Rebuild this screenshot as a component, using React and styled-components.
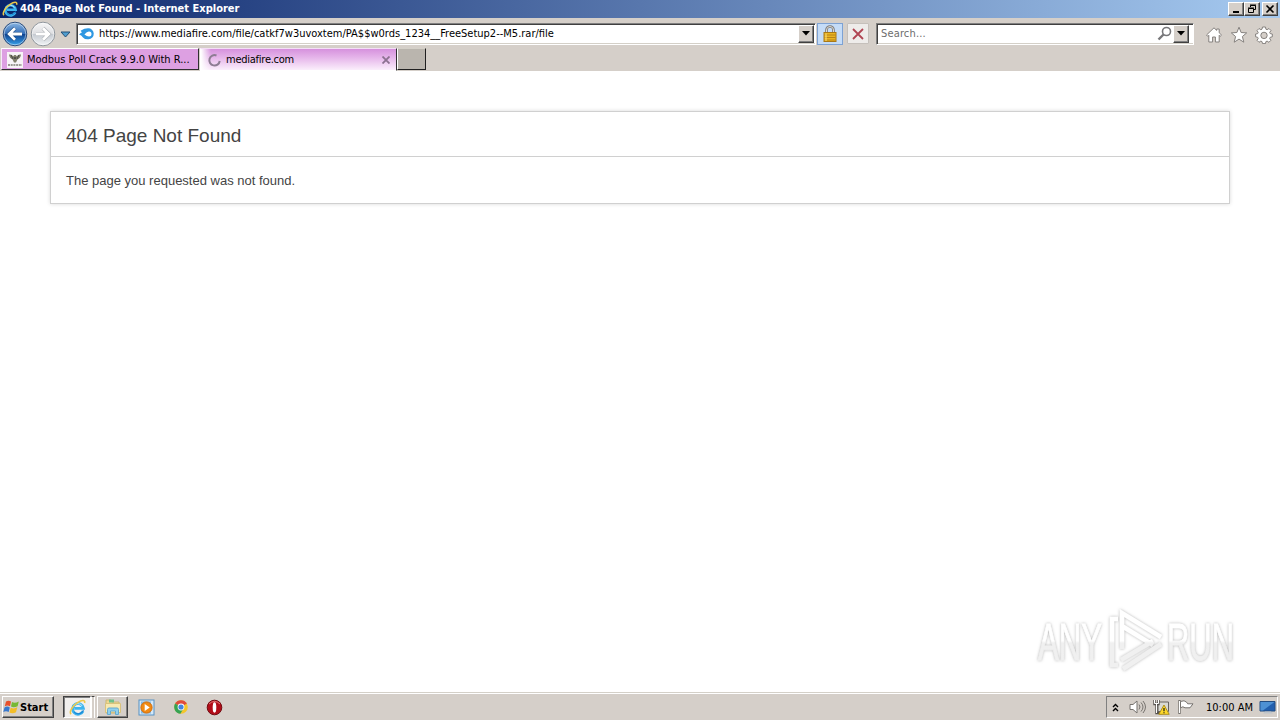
import React from 'react';
import styled, { createGlobalStyle, css } from 'styled-components';

const GlobalStyle = createGlobalStyle`
  * {
    box-sizing: border-box;
  }

  body {
    margin: 0;
    background: #fff;
    overflow: hidden;
  }
`;

const Screen = styled.div`
  width: 1280px;
  height: 720px;
  display: flex;
  flex-direction: column;
  position: relative;
  overflow: hidden;
  background: #fff;
  color: #000;
  font-family: 'DejaVu Sans Condensed', 'DejaVu Sans', sans-serif;
  font-stretch: condensed;
  font-size: 11px;

  svg {
    display: block;
    flex-shrink: 0;
  }
`;

const Label = styled.span`
  white-space: nowrap;
  line-height: 14px;
  padding-top: ${({ $drop }) => $drop || 0}px;
  letter-spacing: ${({ $spacing }) => $spacing || 0}px;
  font-weight: ${({ $bold }) => ($bold ? 700 : 400)};
  color: ${({ $color }) => $color || 'inherit'};
`;

const raised = css`
  border: 1px solid;
  border-color: #fff #404040 #404040 #fff;
  box-shadow: inset -1px -1px 0 #808080;
  background: #d5cfc9;
`;

const TitleBar = styled.div`
  height: 18px;
  display: flex;
  align-items: center;
  padding: 0 2px;
  gap: 2px;
  color: #fff;
  background: linear-gradient(90deg, #0a246a, #a6caf0);
`;

const WindowButtons = styled.div`
  display: flex;
  margin-left: auto;
`;

const WindowButton = styled.div`
  ${raised}
  width: 16px;
  height: 14px;
  display: flex;
  align-items: center;
  justify-content: center;
  margin-left: ${({ $gap }) => $gap || 0}px;
`;

const Toolbar = styled.div`
  height: 30px;
  display: flex;
  align-items: center;
  padding: 1px 7px 0 2px;
  background: #d5cfc9;
`;

const HistoryButtons = styled.div`
  display: flex;
  align-items: center;
  width: 74px;
  gap: 2px;
`;

const Field = styled.div`
  width: ${({ $width }) => $width}px;
  height: 22px;
  display: flex;
  align-items: center;
  padding: 0 1px 0 ${({ $pad }) => $pad}px;
  margin-left: ${({ $gap }) => $gap || 0}px;
  background: #fff;
  border: 1px solid;
  border-color: #808080 #fff #fff #808080;
  box-shadow: inset 1px 1px 0 #404040, inset 0 -1px 0 #d4d0c8;
`;

const FieldText = styled(Label)`
  flex: 1;
  margin-left: ${({ $left }) => $left || 0}px;
`;

const DropButton = styled.div`
  ${raised}
  width: 16px;
  height: 18px;
  display: flex;
  align-items: center;
  justify-content: center;
`;

const LockButton = styled.div`
  width: 26px;
  height: 22px;
  margin: 0 4px 0 1px;
  display: flex;
  align-items: center;
  justify-content: center;
  background: #c5dcf7;
  border: 1px solid #7da2d4;
`;

const StopButton = styled.div`
  width: 22px;
  height: 21px;
  display: flex;
  align-items: center;
  justify-content: center;
  background: #eeecea;
  border: 1px solid #c5c0bb;
  border-radius: 1px;
`;

const Commands = styled.div`
  display: flex;
  gap: 7px;
  margin-left: auto;
  padding-top: 3px;
`;

const TabBar = styled.div`
  height: 23px;
  display: flex;
  align-items: flex-start;
  background: #d5cfc9;
`;

const Tab = styled.div`
  width: ${({ $width }) => $width}px;
  height: 22px;
  margin-left: 1px;
  display: flex;
  align-items: center;
  padding: 2px 5px 0;
  gap: 4px;
  border: 1px solid;
  border-color: #fff #303030 #303030 #f7eafa;
  background: #dda0e2;

  ${({ $active }) =>
    $active &&
    css`
      height: 23px;
      padding: 1px 6px 0;
      border-color: #f4dff6 #303030 #fff #fff;
      background:
        linear-gradient(90deg, #fff, transparent 10px),
        linear-gradient(#d691dd, #e7b9eb 45%, #fbeffc);
    `}
`;

const NewTab = styled.div`
  width: 29px;
  height: 22px;
  background: #bab5ae;
  border: 1px solid;
  border-color: #d4d0c8 #202020 #202020 #fff;
`;

const Page = styled.main`
  flex: 1;
  padding: 40px 50px 0;
  color: #444;
  font-family: 'Liberation Sans', Arial, sans-serif;
`;

const ErrorCard = styled.section`
  height: 93px;
  border: 1px solid #d0d0d0;
  box-shadow: 0 0 4px #d8d8d8;
`;

const ErrorTitle = styled.h1`
  height: 45px;
  margin: 0;
  padding: 12px 15px 0;
  border-bottom: 1px solid #d0d0d0;
  font-size: 19px;
  font-weight: 400;
  line-height: 24px;
`;

const ErrorText = styled.p`
  margin: 16px 15px;
  font-size: 13px;
  line-height: 16px;
`;

const Taskbar = styled.div`
  height: 28px;
  display: flex;
  align-items: center;
  padding: 1px 2px 0;
  background: #d5cfc9;
  border-top: 1px solid #d4d0c8;
  box-shadow: inset 0 1px 0 #fff;
`;

const StartButton = styled.div`
  ${raised}
  width: 52px;
  height: 22px;
  display: flex;
  align-items: center;
`;

const TaskButton = styled.div`
  width: 31px;
  height: 22px;
  display: flex;
  align-items: center;
  justify-content: center;
  margin-left: ${({ $gap }) => $gap || 0}px;
  ${({ $flat }) => !$flat && raised}

  ${({ $pressed }) =>
    $pressed &&
    css`
      width: 28px;
      background: #f1efed;
      border-color: #404040 #fff #fff #404040;
      box-shadow: inset 1px 1px 0 #808080;
    `}
`;

const TaskStack = styled.div`
  width: 4px;
  height: 22px;
  border-top: 1px solid #404040;
  border-right: 1px solid #fff;
  border-left: 1px solid #fff;
`;

const Tray = styled.div`
  width: 172px;
  height: 22px;
  margin-left: auto;
  display: flex;
  align-items: center;
  padding: 0 1px 0 5px;
  border: 1px solid;
  border-color: #808080 #fff #fff #808080;
`;

const TrayItem = styled.div`
  width: ${({ $width }) => $width}px;
`;

const Watermark = styled.div`
  position: absolute;
  left: 1030px;
  top: 602px;
`;

function IeLogo({ size }) {
  return (
    <svg width={size} height={size} viewBox="0 0 16 16" fill="none">
      <path d="M13.2 11.4A5.1 5.1 0 1 1 13.6 8.8H5" stroke="#3db4ee" strokeWidth="2.6" />
      <path d="M13.6 10.5A5.2 5.2 0 0 1 4.6 12" stroke="#1b84d2" strokeWidth="1" />
      <path d="M12.4 6.6A4.7 4.7 0 0 0 4 7" stroke="#a5e6ff" strokeWidth="1" />
      <path d="M2 14.2C-.2 12.6 3.2 6.5 8 3.4C12 .8 15.6.4 14.6 3.8" stroke="#edc84a" strokeWidth="1.5" />
    </svg>
  );
}

function ArrowButton({ forward }) {
  const id = forward ? 'forward' : 'back';
  return (
    <svg width="26" height="26" viewBox="0 0 26 26">
      <defs>
        <linearGradient id={id} x2="0" y2="1">
          <stop stopColor={forward ? '#f7f7f8' : '#8db8e4'} />
          <stop offset=".48" stopColor={forward ? '#dedfe2' : '#356fb8'} />
          <stop offset=".5" stopColor={forward ? '#c4c9d0' : '#0e418f'} />
          <stop offset="1" stopColor={forward ? '#f2f5f7' : '#3aa4ed'} />
        </linearGradient>
      </defs>
      <circle cx="13" cy="13" r="11.8" fill={`url(#${id})`} stroke={forward ? '#8e959c' : '#2b4c7b'} />
      <circle cx="13" cy="13" r="10.8" fill="none" stroke="#fff" strokeOpacity=".45" />
      <g transform={forward ? 'translate(26 0) scale(-1 1)' : undefined}>
        <path
          d="M20 13H7.5M13 7.2L7.2 13l5.8 5.8"
          fill="none"
          stroke={forward ? '#a7abb0' : '#194982'}
          strokeWidth="4"
        />
        <path d="M20 13H7.5M13 7.2L7.2 13l5.8 5.8" fill="none" stroke="#fff" strokeWidth="2.8" />
      </g>
    </svg>
  );
}

const DownTriangle = () => (
  <svg width="8" height="5" viewBox="0 0 8 5">
    <path d="M0 0h8L4 4.5z" fill="#000" />
  </svg>
);

function MediafireIcon() {
  return (
    <svg width="17" height="16" viewBox="0 0 17 16">
      <path
        d="M1 8.5Q2.5 7 4 6.2 1.8 4.8 3.5 4.2 6 2.2 10 2.2A5.5 5.5 0 0 1 10.5 13.2Q7 13.6 5 11.4 3.4 9.3 1 8.5Z"
        fill="#2f98e2"
      />
      <path d="M6.4 8.4Q9 5.4 11 5.5a2.5 2.5 0 0 1 0 5Q9 10.5 6.4 8.4Z" fill="#fff" />
    </svg>
  );
}

function LockIcon() {
  return (
    <svg width="14" height="18" viewBox="0 0 14 18">
      <path d="M3.5 9V5a3.5 3.5 0 0 1 7 0v4" fill="none" stroke="#77777a" strokeWidth="2.6" />
      <path d="M3.5 9V5a3.5 3.5 0 0 1 7 0v4" fill="none" stroke="#dedbd0" />
      <rect x="1" y="7.5" width="12" height="9" fill="#e9b522" stroke="#a97817" />
      <path d="M1.5 10h11M1.5 12.5h11M1.5 15h11" stroke="#b98318" />
      <path d="M3 8.5v7.5" stroke="#ffe27a" />
    </svg>
  );
}

function CommandIcon({ path, children }) {
  return (
    <svg width="18" height="18" viewBox="0 0 18 18" fill="#fff" stroke="#85817e" strokeLinejoin="round">
      <path d={path} />
      {children}
    </svg>
  );
}

function TabFavicon() {
  return (
    <svg width="16" height="16" viewBox="0 0 16 16">
      <path d="M0 0h16v16H0z" fill="#f7f4f7" />
      <path
        d="M2 2.5C4 2 5.4 3.1 6.2 4.2L7.2 3h1.6l1 1.2C10.6 3.1 12 2 14 2.5 13.8 5 12.4 7 10.4 7.5L9 10.5H7L5.6 7.5C3.6 7 2.2 5 2 2.5Z"
        fill="#81806c"
      />
      <path d="M4 3l2 4M12 3l-2 4M7 5l1 2 1-2" stroke="#444" fill="none" />
      <path d="M1 13h14" stroke="#9b9a94" strokeWidth="2" strokeDasharray="2 .7" />
    </svg>
  );
}

function WindowsFlag() {
  return (
    <svg width="17" height="17" viewBox="0 0 17 17">
      <path d="M3 2.5Q5.5.8 8 2.5L7 7.2Q4.5 5.7 1.8 7.3Z" fill="#e8502b" />
      <path d="M9 3Q11.8 4.6 15.8 2.4L14.6 7.2Q11 9 8 7.6Z" fill="#77b936" />
      <path d="M1.5 8.4Q4.2 6.8 6.8 8.4L5.7 13Q3 11.4.3 13Z" fill="#3878cd" />
      <path d="M7.7 8.8Q11 10.2 14.3 8.3L13 13.2Q9.5 15.1 6.5 13.5Z" fill="#f3bd27" />
    </svg>
  );
}

function FolderIcon() {
  return (
    <svg width="18" height="18" viewBox="0 0 18 18">
      <path d="M2 2h5l1 2h7v11H2z" fill="#eed88e" stroke="#c9b679" />
      <path d="M5 1.5h5v3H5z" fill="#6fc08b" />
      <path d="M1.5 5.5h15v9h-15z" fill="#f7e9b2" stroke="#d9c27c" />
      <path d="M3.5 16.5v-5q0-1.5 1.5-1.5h8q1.5 0 1.5 1.5v5h-3v-3.5h-5v3.5z" fill="#8fd0ee" stroke="#66aacf" />
    </svg>
  );
}

function MediaPlayerIcon() {
  return (
    <svg width="17" height="17" viewBox="0 0 17 17">
      <rect x="1" y="1" width="15" height="15" fill="#d4e8f8" stroke="#5792c4" />
      <rect x="3" y="2.5" width="10" height="12" fill="#88b9df" />
      <circle cx="8.5" cy="8.5" r="5.6" fill="#f18a13" stroke="#d56c08" />
      <path d="M6.7 5v7l5-3.5z" fill="#fff" />
    </svg>
  );
}

function ChromeIcon() {
  return (
    <svg width="16" height="16" viewBox="0 0 16 16">
      <circle cx="8" cy="8" r="6.8" fill="#f3c62c" />
      <path d="M8 8L2.1 4.6A6.8 6.8 0 0 1 13.9 4.6Z" fill="#df4b3d" />
      <path d="M8 8L2.1 4.6A6.8 6.8 0 0 0 7.4 14.8L10.8 9Z" fill="#36a354" />
      <circle cx="8" cy="8" r="3.4" fill="#fff" />
      <circle cx="8" cy="8" r="2.6" fill="#4285df" />
    </svg>
  );
}

function OperaIcon() {
  return (
    <svg width="17" height="17" viewBox="0 0 17 17">
      <circle cx="8.5" cy="8.5" r="7.3" fill="#b20d18" stroke="#700a10" />
      <path d="M3 5Q8.5-.2 14 5" stroke="#e77878" fill="none" />
      <ellipse cx="8.5" cy="8.5" rx="1.8" ry="5.2" fill="#fff" />
    </svg>
  );
}

function VolumeIcon() {
  return (
    <svg width="17" height="16" viewBox="0 0 17 16" fill="none" stroke="#77736f">
      <path d="M1 5.5h3L8 2v12l-4-3.5H1z" fill="#fff" />
      <path d="M10 5.5q2 2.5 0 5M12 3.5q4 4.5 0 9M14 2q5 6 0 12" />
    </svg>
  );
}

function NetworkIcon() {
  return (
    <svg width="17" height="16" viewBox="0 0 17 16">
      <path d="M5 3h10.5v9.5H5z" fill="#d9d9d3" stroke="#66635f" />
      <path d="M1.5 1v4h4V1M3.5 5v9h5" fill="none" stroke="#55514e" strokeWidth="2.4" />
      <path d="M1.5 1v3.5h4V1M3.5 5v9" fill="none" stroke="#fff" />
      <path d="M11 6l5.2 9.3H5.8z" fill="#ffd929" stroke="#ad8f20" />
      <path d="M11 9v3.3M11 13.3v1" stroke="#292718" strokeWidth="1.3" />
    </svg>
  );
}

function FlagIcon() {
  return (
    <svg width="17" height="16" viewBox="0 0 17 16">
      <path d="M2.5 1v14" stroke="#77736f" strokeWidth="2.4" />
      <path d="M3.5 2.5q4-1.8 6 .6l1.2 1.7H16l-3 4H8q-2-2-4.5 0z" fill="#fff" stroke="#77736f" />
      <path d="M2.5 2v12" stroke="#fff" />
    </svg>
  );
}

function DesktopIcon() {
  return (
    <svg width="17" height="16" viewBox="0 0 17 16">
      <path d="M1 2.5h15v9.5H1z" fill="#225fae" stroke="#234c80" />
      <path d="M1.5 3h14L4 11.5H1.5z" fill="#4e91d4" />
      <path d="M6 12.5h6l2 2H4z" fill="#bfc5cb" />
    </svg>
  );
}

function AnyRunLogo() {
  return (
    <svg width="220" height="76" viewBox="0 0 220 76">
      <defs>
        <linearGradient id="watermark" gradientUnits="userSpaceOnUse" x1="0" y1="0" x2="0" y2="76">
          <stop offset=".51" stopColor="#fff" />
          <stop offset=".54" stopColor="#f0f0f0" />
        </linearGradient>
        {/* lettering is drawn from its baseline, 58px down the logo */}
        <linearGradient id="lettering" gradientUnits="userSpaceOnUse" x1="0" y1="-58" x2="0" y2="18">
          <stop offset=".51" stopColor="#fff" />
          <stop offset=".54" stopColor="#f0f0f0" />
        </linearGradient>
        <filter id="glow" x="-10%" y="-20%" width="120%" height="140%">
          <feDropShadow dx="0" dy="0" stdDeviation="1.6" floodColor="#999" floodOpacity=".75" />
        </filter>
      </defs>
      <g filter="url(#glow)">
        <g
          fill="url(#lettering)"
          stroke="url(#lettering)"
          strokeWidth=".8"
          fontFamily="Liberation Sans, sans-serif"
          fontSize="52"
        >
          <text transform="translate(8 58) scale(.6 1)">ANY</text>
          <text transform="translate(137 58) scale(.595 1)">RUN</text>
        </g>
        <g fill="none" stroke="url(#watermark)" strokeWidth="4.5">
          <path d="M88 17h-6v46h6" />
          <path d="M92 47V11l39 24M92 24l31 19M131 42L93 67M91 58l32-19" />
        </g>
      </g>
    </svg>
  );
}

const gearPath =
  'M7.5 1h3l.4 2.2 1.2.5L14 2.5 16 4.6l-1.3 1.8.5 1.2 2.1.4v2.8l-2.1.5-.5 1.2 1.2 1.8-2 2-1.8-1.2-1.2.5-.4 2H7.5L7 15.6l-1.2-.5L4 16.3l-2-2 1.2-1.8-.5-1.2-2.1-.5V8l2.1-.4.5-1.2L2 4.6l2-2.1 1.8 1.2L7 3.2z';

export default function App() {
  return (
    <Screen>
      <GlobalStyle />
      <TitleBar>
        <IeLogo size={16} />
        <Label $bold>404 Page Not Found - Internet Explorer</Label>
        <WindowButtons>
          <WindowButton>
            <svg width="12" height="10">
              <path d="M3 8h6" stroke="#000" strokeWidth="2" />
            </svg>
          </WindowButton>
          <WindowButton>
            <svg width="12" height="10" fill="none" stroke="#000">
              <path d="M4.5 3V1.5h5v4H8M4 1h6M2.5 4.5h5v4h-5zM2 4h6" />
            </svg>
          </WindowButton>
          <WindowButton $gap={2}>
            <svg width="12" height="10">
              <path d="M2.5 1.5l7 7M9.5 1.5l-7 7" stroke="#000" strokeWidth="1.6" />
            </svg>
          </WindowButton>
        </WindowButtons>
      </TitleBar>

      <Toolbar>
        <HistoryButtons>
          <ArrowButton />
          <ArrowButton forward />
          <svg width="14" height="10" viewBox="0 0 14 10">
            <path d="M3 3h9L7.5 8z" fill="#4f9ed0" stroke="#254e74" />
          </svg>
        </HistoryButtons>
        <Field $width={740} $pad={1}>
          <MediafireIcon />
          <FieldText $left={4}>
            https://www.mediafire.com/file/catkf7w3uvoxtem/PA$$w0rds_1234__FreeSetup2--M5.rar/file
          </FieldText>
          <DropButton><DownTriangle /></DropButton>
        </Field>
        <LockButton><LockIcon /></LockButton>
        <StopButton>
          <svg width="14" height="14" viewBox="0 0 14 14">
            <path d="M2 2l10 10M12 2L2 12" stroke="#b04553" strokeWidth="1.8" />
          </svg>
        </StopButton>
        <Field $width={318} $pad={4} $gap={7}>
          <FieldText $color="#6d6d6d" $spacing={0.15}>Search...</FieldText>
          <svg width="16" height="16" viewBox="0 0 16 16" fill="none" stroke="#77777a">
            <circle cx="9.5" cy="5.5" r="4" strokeWidth="1.6" />
            <path d="M6.5 8.5l-5 5" strokeWidth="2.4" />
          </svg>
          <DropButton><DownTriangle /></DropButton>
          <TrayItem $width={3} />
        </Field>
        <Commands>
          <CommandIcon path="M1.5 9L9 1.8l2.7 2.6V3h2.5v3.8L16.5 9l-1.3 1.3-1-1V16h-3.8v-5H7.6v5H3.8V9.3l-1 1z" />
          <CommandIcon path="M9 1.2l2.1 5.3 5.6.4-4.3 3.6 1.4 5.7L9 13.1l-4.8 3.1 1.4-5.7L1.3 6.9l5.6-.4z" />
          <CommandIcon path={gearPath}>
            <circle cx="9" cy="9.4" r="3.2" fill="#d5cfc9" />
          </CommandIcon>
        </Commands>
      </Toolbar>

      <TabBar>
        <Tab $width={198}>
          <TabFavicon />
          <Label $spacing={-0.02}>Modbus Poll Crack 9.9.0 With R...</Label>
        </Tab>
        <Tab $active $width={197}>
          <svg width="15" height="15" viewBox="0 0 15 15" fill="none">
            <path d="M9.5 2.5A5.2 5.2 0 1 0 12.7 8" stroke="#8d7c93" strokeWidth="2" />
          </svg>
          <FieldText $spacing={-0.25}>mediafire.com</FieldText>
          <svg width="8" height="8" viewBox="0 0 8 8">
            <path d="M.5.5l7 7M7.5.5l-7 7" stroke="#8c7190" strokeWidth="1.8" />
          </svg>
        </Tab>
        <NewTab />
      </TabBar>

      <Page>
        <ErrorCard>
          <ErrorTitle>404 Page Not Found</ErrorTitle>
          <ErrorText>The page you requested was not found.</ErrorText>
        </ErrorCard>
      </Page>

      <Taskbar>
        <StartButton>
          <WindowsFlag />
          <Label $bold $drop={1}>Start</Label>
        </StartButton>
        <TaskButton $pressed $gap={9}><IeLogo size={17} /></TaskButton>
        <TaskStack />
        <TaskButton $gap={2}><FolderIcon /></TaskButton>
        <TaskButton $flat $gap={3}><MediaPlayerIcon /></TaskButton>
        <TaskButton $flat $gap={3}><ChromeIcon /></TaskButton>
        <TaskButton $flat $gap={3}><OperaIcon /></TaskButton>
        <Tray>
          <TrayItem $width={17}>
            <svg width="7" height="9" viewBox="0 0 7 9" fill="none" stroke="#000" strokeWidth="1.4">
              <path d="M1 4l2.5-2.5L6 4M1 8l2.5-2.5L6 8" />
            </svg>
          </TrayItem>
          <TrayItem $width={24}><VolumeIcon /></TrayItem>
          <TrayItem $width={24}><NetworkIcon /></TrayItem>
          <TrayItem $width={29}><FlagIcon /></TrayItem>
          <Label $drop={1}>10:00 AM</Label>
          <WindowButtons><DesktopIcon /></WindowButtons>
        </Tray>
      </Taskbar>

      <Watermark><AnyRunLogo /></Watermark>
    </Screen>
  );
}
